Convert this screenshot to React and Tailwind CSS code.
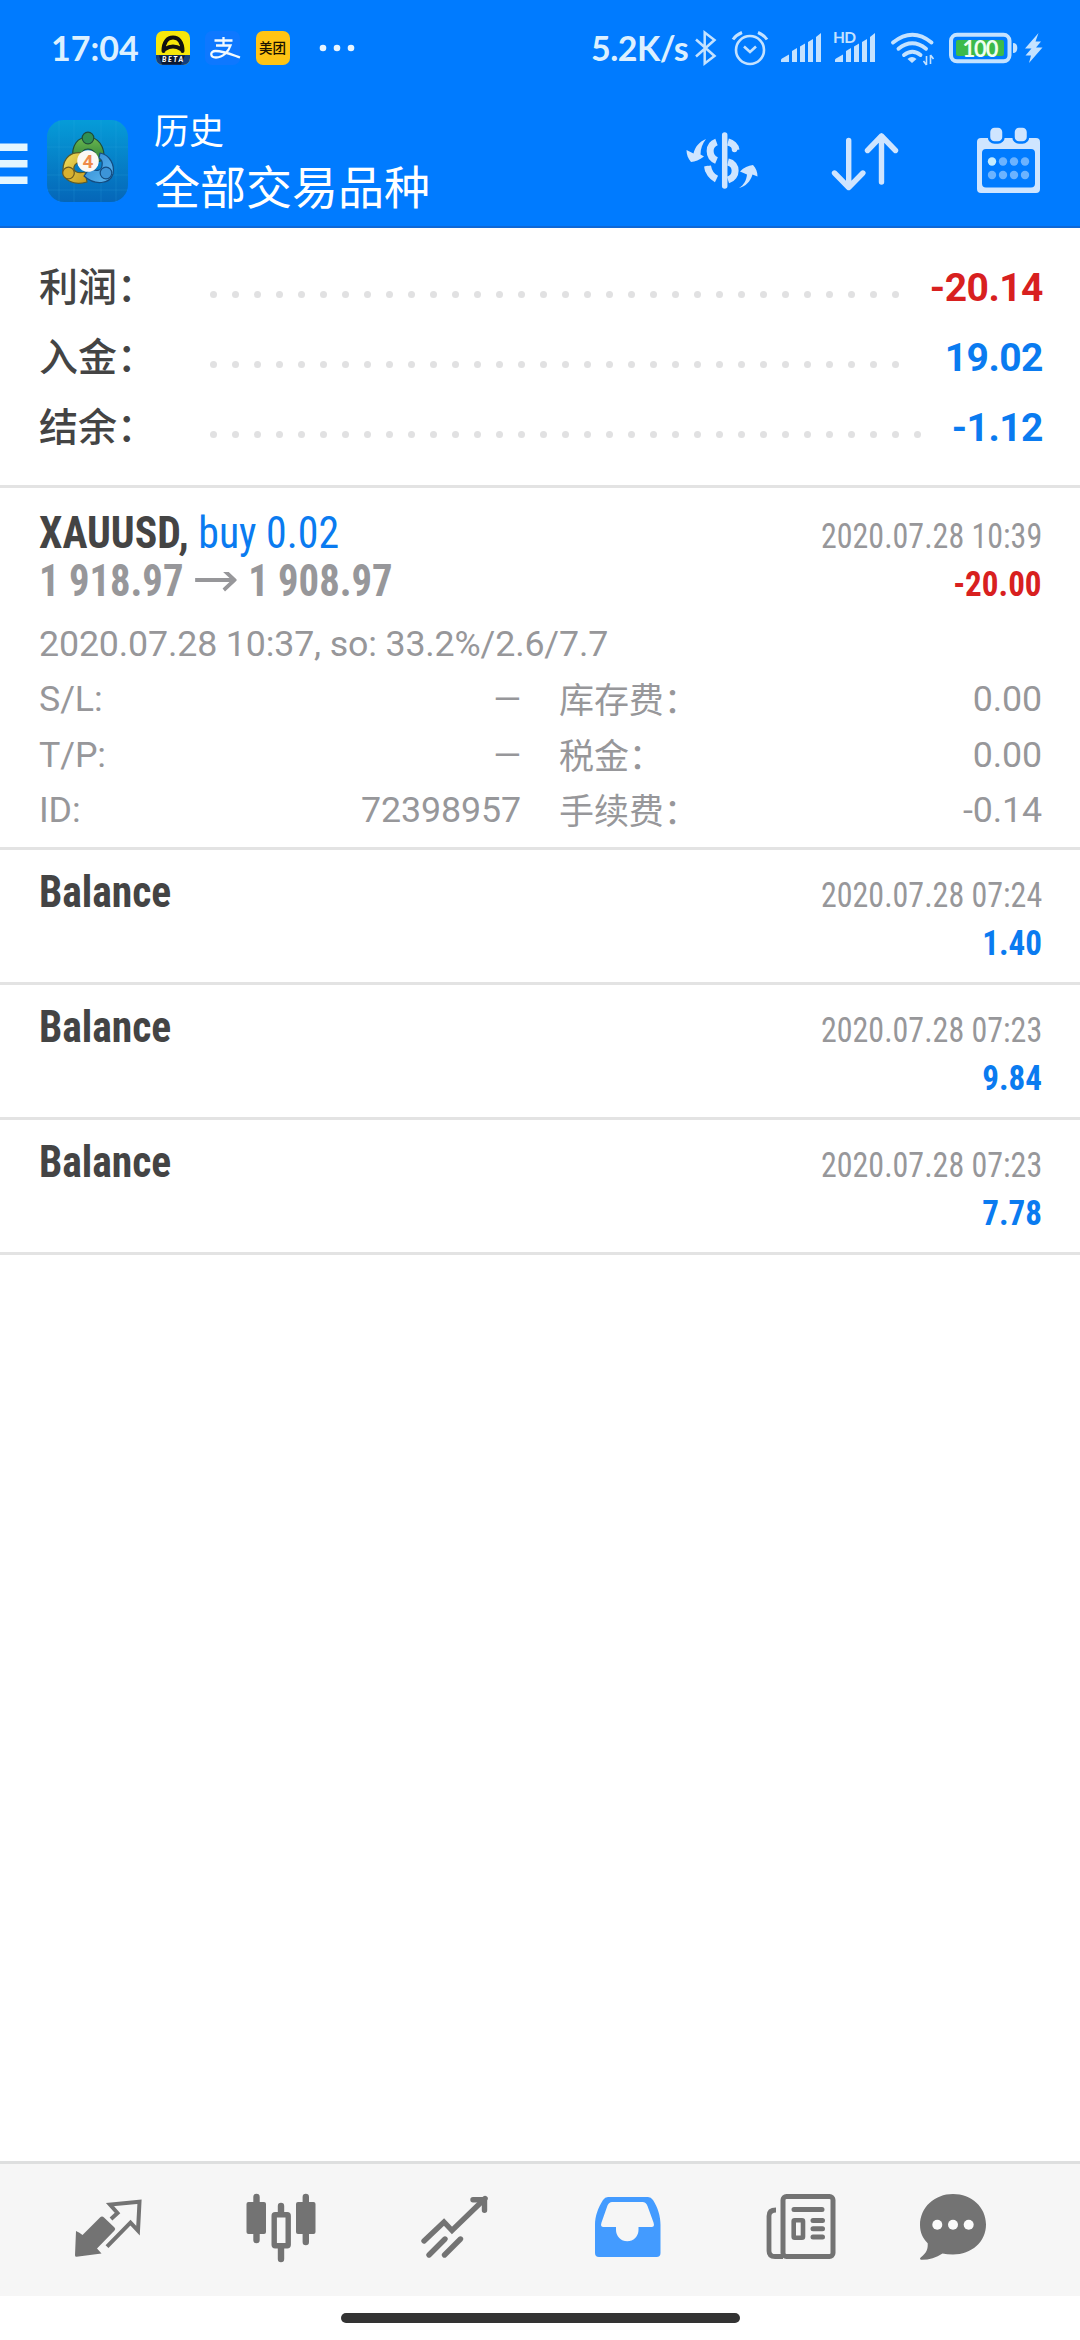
import React from 'react';

// Drawing surface whose viewBox uses screen coordinates
const Glyph = ({ x, y, w, h, children }) => (
  <svg width={w} height={h} viewBox={`${x} ${y} ${w} ${h}`} fill="none" className="block shrink-0">
    {children}
  </svg>
);

const summary = [
  { label: '利润：', value: '-20.14', dots: 32, color: 'text-[#d8201f]' },
  { label: '入金：', value: '19.02', dots: 32, color: 'text-[#0a7bf0]' },
  { label: '结余：', value: '-1.12', dots: 33, color: 'text-[#0a7bf0]' },
];

const details = [
  ['S/L:', '—', '库存费：', '0.00'],
  ['T/P:', '—', '税金：', '0.00'],
  ['ID:', '72398957', '手续费：', '-0.14'],
];

const balances = [
  { date: '2020.07.28 07:24', value: '1.40' },
  { date: '2020.07.28 07:23', value: '9.84' },
  { date: '2020.07.28 07:23', value: '7.78' },
];

const Bars = ({ x }) => (
  <g fill="#c4e2ff">
    <path d={`M${x} 62v-2q0-1 1-1.500l7-4v7.500z`} />
    <path d={`M${x + 11} 62v-11l5-3v14z`} />
    <path d={`M${x + 19} 62v-15.500l5-3v18.500z`} />
    <path d={`M${x + 27} 62v-20l5-3v23z`} />
    <path d={`M${x + 35} 62v-25l5-4v29z`} />
  </g>
);

const StatusBar = () => (
  <div className="flex h-24 items-center pl-[51px]">
    <span className="w-[105px] font-['Lato'] text-[34px] font-bold leading-none text-[#dcf0ff]">17:04</span>
    <Glyph x={156} y={0} w={207} h={96}>
      {/* Amap beta */}
      <clipPath id="amap"><rect x="156" y="31" width="34" height="34" rx="7" /></clipPath>
      <g clipPath="url(#amap)">
        <rect x="156" y="31" width="34" height="34" fill="#f6e70a" />
        <path d="M163.500 51c0-9 4-13.500 9.500-13.500s9.500 4.500 9.500 13.500M165 49q8-5 16 0" stroke="#111" strokeWidth="4" strokeLinecap="round" />
        <rect x="156" y="55" width="34" height="10" fill="#123e80" />
        <path d="M159 55.500h26l-4 9h-19z" fill="#0b1830" />
        <text x="162" y="62" fill="#fff" fontFamily="Lato" fontSize="7" fontWeight="900" fontStyle="italic" textLength="21">BETA</text>
      </g>
      {/* Alipay */}
      <rect x="205" y="31" width="35" height="34" rx="7" fill="#0e78ff" />
      <path d="M214.500 40.500h18M223.500 37v8M216 45.500h14.500c-2 6-7.500 12-14.500 12-6 0-6.500-6.500-.5-6.500 8 0 16 3.500 24.500 6.500" stroke="#f2faff" strokeWidth="2.300" />
      {/* Meituan */}
      <rect x="256" y="31" width="34" height="34" rx="7" fill="#ffc414" />
      <text x="259" y="53" fill="#1a1200" fontFamily="Noto Sans CJK SC" fontSize="13.500" fontWeight="500">美团</text>
      <g fill="#e8f5ff">
        <circle cx="323" cy="48" r="3.300" />
        <circle cx="337" cy="48" r="3.300" />
        <circle cx="351" cy="48" r="3.300" />
      </g>
    </Glyph>
    <span className="ml-[228px] w-[97px] whitespace-nowrap font-['Lato'] text-[34px] font-bold leading-none tracking-[-0.5px] text-[#dcf0ff]">5.2K/s</span>
    <Glyph x={688} y={0} w={392} h={96}>
      {/* Bluetooth */}
      <path d="M696 39.500l18.500 16.500-9.800 7.500v-31l9.800 7.500L696 56.500" stroke="#c4e2ff" strokeWidth="2.500" />
      {/* Alarm */}
      <circle cx="750" cy="50" r="14" stroke="#c4e2ff" strokeWidth="2.600" />
      <path d="M744 46.500l6 5.500 6-5.500" stroke="#c4e2ff" strokeWidth="2.600" />
      <path d="M733 39.500q3-4.500 9-7M767 39.500q-3-4.500-9-7" stroke="#c4e2ff" strokeWidth="3" />
      <Bars x={781} />
      <Bars x={835} />
      <rect x="832" y="30" width="25" height="15" fill="#007bff" />
      <text x="833" y="43" fill="#c4e2ff" fontFamily="Lato" fontSize="15.500" fontWeight="700" textLength="23">HD</text>
      {/* Wifi */}
      <path d="M893 42.500q19.500-15.500 38.500 0M898.500 48.800q13.700-11 27.500 0M904 55q8.500-6.500 16.500 0" stroke="#c4e2ff" strokeWidth="3.900" strokeLinecap="round" />
      <path d="M907.500 59q4.500-4 9 0l-4.500 4z" fill="#c4e2ff" />
      <path d="M926.500 56v9M930.500 55v9M926.500 65l-3-4M930.500 55l3 4" stroke="#c4e2ff" strokeWidth="1.600" />
      {/* Battery */}
      <rect x="951" y="34.800" width="58.500" height="26.500" rx="6" stroke="#c4e2ff" strokeWidth="4" />
      <path d="M1013 43q4.300 0 4.300 5t-4.300 5z" fill="#c4e2ff" />
      <rect x="956" y="40" width="48" height="16" rx="2" fill="#3cba4a" />
      <text x="962.500" y="57" fill="#f0fff0" fontFamily="Lato" fontSize="22" fontWeight="700" textLength="36">100</text>
      <path d="M1038.500 33l-13.500 15.500h6.500l-6 7h5.500l-2 7.500 13.500-15.500h-6.500l5-6h-5.500z" fill="#c4e2ff" />
    </Glyph>
  </div>
);

const Logo = () => (
  <svg width="81" height="82" viewBox="0 0 81 82" fill="none" className="block shrink-0">
    <defs>
      <linearGradient id="sky" x1="0" y1="0" x2="0" y2="1">
        <stop offset="0" stopColor="#069cd8" />
        <stop offset="1" stopColor="#0566b8" />
      </linearGradient>
      <linearGradient id="green" x1="0" y1="0" x2="0" y2="1">
        <stop offset="0" stopColor="#6cb84e" />
        <stop offset="1" stopColor="#2d7f3a" />
      </linearGradient>
      <linearGradient id="gold" x1="0" y1="0" x2="1" y2="1">
        <stop offset="0" stopColor="#efe060" />
        <stop offset="1" stopColor="#c79a1c" />
      </linearGradient>
      <linearGradient id="blue" x1="0" y1="0" x2="1" y2="1">
        <stop offset="0" stopColor="#2f86d0" />
        <stop offset="1" stopColor="#5cb8f0" />
      </linearGradient>
    </defs>
    <rect width="81" height="82" rx="17" fill="url(#sky)" />
    <path d="M0 27h81M0 55h81M0 70h81M12 0v82M27 0v82M54 0v82M69 0v82" stroke="#3cb6ea" strokeOpacity=".18" />
    {/* Three figures linked round the badge */}
    <g strokeWidth="1.200" strokeLinejoin="round">
      <path d="M26 39c-2-14 5-22 15-22s17 9 16 23l-7 2c0-9-4-13-9-13s-7 4-7 9z" fill="url(#green)" stroke="#1f4d3a" />
      <path d="M36 33c-12-2-20 5-20 17 0 10 10 16 24 12l-2-10c-8 2-12-1-11-5s5-5 9-5z" fill="url(#gold)" stroke="#5a5a28" />
      <path d="M53 33c10 2 15 12 13 21-3 10-18 12-29 2l6-8c6 4 11 3 12-2s-1-7-3-8z" fill="url(#blue)" stroke="#144c80" />
      <circle cx="41" cy="18" r="5.800" fill="#2f9054" stroke="#1f4d3a" />
      <circle cx="21.500" cy="53" r="5.800" fill="#d8b02e" stroke="#6a5a22" />
      <circle cx="59" cy="53" r="5.800" fill="#3c94d8" stroke="#144c80" />
    </g>
    <circle cx="41" cy="41" r="10.800" fill="#fbf8f4" />
    <text x="41" y="48" textAnchor="middle" fill="#ee8a4a" fontFamily="Roboto" fontSize="19" fontWeight="700">4</text>
  </svg>
);

const Toolbar = () => (
  <div className="flex h-[130px] items-center">
    <Glyph x={0} y={96} w={47} h={130}>
      <path d="M0 143.500h27.500v7.500H0zM0 160h27.500v7.500H0zM0 176.500h27.500v7.500H0z" fill="#e4f6ff" />
    </Glyph>
    <Logo />
    <div className="ml-[26px] flex w-[516px] flex-col pb-[5px] font-['Noto_Sans_CJK_SC',sans-serif] text-white">
      <span className="text-[35px] leading-[50px]">历史</span>
      <span className="text-[46px] leading-[60px]">全部交易品种</span>
    </div>
    <Glyph x={670} y={96} w={410} h={130}>
      {/* Currency exchange */}
      <g stroke="#cfe5ff" strokeWidth="5.500">
        <path d="M724.700 135v51" strokeLinecap="round" />
        <path d="M716.500 142c-8.500 3-8.500 15 0 18.500M728 142c4 1 7.500 4 8 8M728 162c9.500 2 9.500 15 0 18M707.500 166c1 6 4 10.500 9 13" strokeWidth="7" />
        <path d="M734.500 148v1.500M707.500 168.500v1" strokeLinecap="round" />
      </g>
      <path d="M706 139c-7 3-11 8-12.500 14.500l-7-3.500c0 4.500 1.500 8.500 4.500 12 4-.5 8.500-2 13-5.500l-3.500-2c0-6 2-11 5.500-15.500z" fill="#cfe5ff" />
      <path d="M739 188c5-3 7.500-8 8-13.500l-7-3c4-4 8-6 13-6.500 3 3 4.500 7 4.500 11.500l-5-2c-2 7-7 12-13.500 13.500z" fill="#cfe5ff" />
      {/* Sort */}
      <path d="M848.700 140.500v46M834.500 173l14.200 14.500 14.200-14.500M881.500 182v-46M867.500 150.500l14-14.500 14 14.500" stroke="#cfe5ff" strokeWidth="5.400" strokeLinecap="round" strokeLinejoin="round" />
      {/* Calendar */}
      <path fillRule="evenodd" d="M981 138h55q4 0 4 4v47q0 4-4 4h-55q-4 0-4-4v-47q0-4 4-4zM986 149q-4 0-4 4v30.500q0 4 4 4h45q4 0 4-4V153q0-4-4-4z" fill="#cfe5ff" />
      <g fill="#cfe5ff" stroke="#007bff" strokeWidth="2.500">
        <rect x="989" y="126.500" width="14.500" height="16" rx="5.500" />
        <rect x="1013.500" y="126.500" width="14.500" height="16" rx="5.500" />
      </g>
      <circle cx="992" cy="161.500" r="4.200" fill="#c4ecff" />
      <g fill="#6cb3ff">
        <circle cx="1003" cy="161.500" r="4.200" />
        <circle cx="1014" cy="161.500" r="4.200" />
        <circle cx="1025" cy="161.500" r="4.200" />
        <circle cx="992" cy="175" r="4.200" />
        <circle cx="1003" cy="175" r="4.200" />
        <circle cx="1014" cy="175" r="4.200" />
        <circle cx="1025" cy="175" r="4.200" />
      </g>
    </Glyph>
  </div>
);

const Summary = () => (
  <div className="h-[260px] border-b-[3px] border-[#e3e3e3] pl-[39px] pr-[37px] pt-[22px]">
    {summary.map((row) => (
      <div key={row.label} className="flex h-[70px] items-center">
        <span className="w-[163.500px] pb-[3px] font-['Noto_Sans_CJK_SC',sans-serif] text-[39px] font-medium leading-[66px] text-[#444]">{row.label}</span>
        <div className="mt-[18px] flex">
          {Array.from({ length: row.dots }).map((_, i) => (
            <i key={i} className="mx-[7.500px] size-[7px] rounded-full bg-[#e1e1e2]" />
          ))}
        </div>
        <span className={`ml-auto pt-[6px] text-[39px] font-bold leading-[64px] tracking-[-0.5px] ${row.color}`}>{row.value}</span>
      </div>
    ))}
  </div>
);

const Trade = () => (
  <div className="h-[362px] border-b-[3px] border-[#e3e3e3] pl-[39px] pr-[38px] pt-[21px] text-[#97979a]">
    <div className="flex h-12 items-baseline justify-between font-['Roboto_Condensed']">
      <div className="origin-left scale-x-[0.95] whitespace-pre text-[44px] leading-[48px]">
        <span className="font-bold text-[#444]">XAUUSD, </span>
        <span className="text-[#0a7bf0]">buy 0.02</span>
      </div>
      <span className="origin-right scale-x-[0.895] text-[35.750px] leading-10">2020.07.28 10:39</span>
    </div>
    <div className="flex h-12 items-baseline justify-between font-['Roboto_Condensed'] font-bold">
      <div className="flex origin-left scale-x-[0.924] items-baseline text-[44px] leading-[48px]">
        <span>1 918.97</span>
        <svg width="46" height="24" viewBox="0 0 46 24" fill="none" className="ml-[12px] mr-[12px]">
          <path d="M1 8h43M32-2l11.500 10-11.500 10" stroke="#97979a" strokeWidth="4" />
        </svg>
        <span>1 908.97</span>
      </div>
      <span className="origin-right scale-x-[0.925] text-[35.750px] leading-10 text-[#d8201f]">-20.00</span>
    </div>
    <div className="mt-[14px] text-[35.750px] leading-[50px] tracking-[-0.150px]">2020.07.28 10:37, so: 33.2%/2.6/7.7</div>
    <div className="mt-[3px] text-[35.750px] leading-[55.500px] tracking-[-0.100px]">
      {details.map(([a, b, c, d]) => (
        <div key={a} className="flex h-[55.500px] justify-between">
          <div className="flex w-[482px] justify-between">
            <span>{a}</span>
            <span>{b}</span>
          </div>
          <div className="flex w-[483px] justify-between">
            <span className="font-['Noto_Sans_CJK_SC',sans-serif] text-[35px] leading-[51.500px]">{c}</span>
            <span>{d}</span>
          </div>
        </div>
      ))}
    </div>
  </div>
);

const Balance = ({ date, value }) => (
  <div className="h-[135px] border-b-[3px] border-[#e3e3e3] pl-[39px] pr-[38px] pt-[18px] font-['Roboto_Condensed']">
    <div className="flex h-12 items-baseline justify-between">
      <span className="origin-left scale-x-[0.943] text-[44px] font-bold leading-[48px] text-[#444]">Balance</span>
      <span className="origin-right scale-x-[0.895] text-[35.750px] leading-10 text-[#97979a]">{date}</span>
    </div>
    <div className="origin-right scale-x-[0.925] pt-[7px] text-right text-[35.750px] font-bold leading-10 text-[#0a7bf0]">{value}</div>
  </div>
);

const NavBar = () => (
  <div className="flex h-[135px] border-t-[3px] border-[#dedfdf] bg-[#f6f6f6] pl-[22px]">
    {/* Quotes */}
    <Glyph x={22} y={2164} w={173} h={132}>
      <path d="M76 2231q3.500 1.500 6.500 4l17.500-17.500q2-2 4 0l10.500 10q1.500 1.500 0 3l-17.500 18 4.500 5-25 3.200q-1.500 0-1.500-1.500z" fill="#737373" />
      <path d="M111 2219l6.500-6-7.500-8.500 29.500-2.800-1.500 29-7.500-8-23.500 24" stroke="#737373" strokeWidth="4" />
    </Glyph>
    {/* Charts */}
    <Glyph x={195} y={2164} w={173} h={132}>
      <path d="M256.500 2197v43M305.800 2197v45M281 2206v10M281 2248v11" stroke="#737373" strokeWidth="6.400" strokeLinecap="round" />
      <rect x="246.500" y="2202" width="19.500" height="32" rx="2" fill="#737373" />
      <rect x="296" y="2202" width="19.500" height="32" rx="2" fill="#737373" />
      <rect x="274.200" y="2214.700" width="14" height="31" fill="#f6f6f6" stroke="#737373" strokeWidth="5.400" rx="1" />
    </Glyph>
    {/* Trade */}
    <Glyph x={368} y={2164} w={173} h={132}>
      <path d="M424 2241l20-19 8 8.500 33-32M429 2255l16-16M444.500 2255l16-16" stroke="#737373" strokeWidth="5.400" strokeLinecap="round" />
      <path d="M473 2199.700h11.500v10.500" stroke="#737373" strokeWidth="5.400" strokeLinecap="round" />
    </Glyph>
    {/* History */}
    <Glyph x={541} y={2164} w={173} h={132}>
      <path fillRule="evenodd" d="M608 2197h40q3 0 5 3c5 8 7.500 16 7.500 25v28q0 4-4 4h-57.500q-4 0-4-4v-28c0-9 3-17 8-25q2-3 5-3zM612 2202q-3 0-4.500 3.500l-6 17q-1.500 4.500 2 4.500h12.500v3a11 11 0 0 0 22.500 0v-3h13q3.500 0 2-4.500l-6-16.500q-1.500-4-5-4z" fill="#439bff" />
    </Glyph>
    {/* News */}
    <Glyph x={714} y={2164} w={173} h={132}>
      <rect x="783" y="2196.500" width="50" height="60" rx="3.500" stroke="#737373" strokeWidth="5" />
      <path d="M776 2210q-7 0-7 6v35q0 5.500 6 5.500h8" stroke="#737373" strokeWidth="4.800" />
      <path d="M794 2209.500h28M813 2220.500h9.500M813 2228.800h9.500M813 2237h9.500" stroke="#737373" strokeWidth="5" strokeLinecap="round" />
      <rect x="793.700" y="2220.200" width="9.300" height="17.500" rx="1" stroke="#737373" strokeWidth="4.600" />
    </Glyph>
    {/* Messages */}
    <Glyph x={887} y={2164} w={132} h={132}>
      <path d="M953 2194c18.500 0 33 13 33 30.500s-14.500 30-33 30q-6 0-10.500-1c-6.500 4.500-14 6.500-21.500 6.300q-2-.8 0-2.500c6-4.500 7-9 6.700-14-5-5-7.700-11-7.700-18.300 0-17.500 14.500-31 33-31z" fill="#737373" />
      <circle cx="937.300" cy="2224.700" r="5" fill="#fafafa" />
      <circle cx="953" cy="2224.700" r="5" fill="#fafafa" />
      <circle cx="968.700" cy="2224.700" r="5" fill="#fafafa" />
    </Glyph>
  </div>
);

const App = () => {
  return (
    <div className="flex h-[2340px] w-[1080px] flex-col overflow-hidden bg-white font-['Roboto',sans-serif]">
      <header className="border-b-2 border-[#0f68d6] bg-[#007bff]">
        <StatusBar />
        <Toolbar />
      </header>
      <main className="flex-1">
        <Summary />
        <Trade />
        {balances.map((b) => (
          <Balance key={b.value} {...b} />
        ))}
      </main>
      <NavBar />
      <div className="flex h-11 justify-center pt-[17px]">
        <div className="h-[10px] w-[399px] rounded-full bg-[#333]" />
      </div>
    </div>
  );
};

export default App;
